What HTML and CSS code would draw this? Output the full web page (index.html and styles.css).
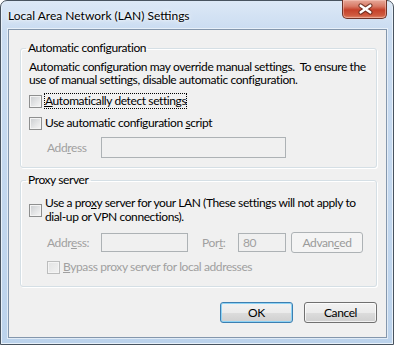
FILE: index.html
```html
<!DOCTYPE html>
<html lang="en">
<head>
    <meta charset="UTF-8">
    <title>Local Area Network (LAN) Settings</title>
    <link rel="stylesheet" href="styles.css">
</head>
<body>

    <div class="window">
        <div class="titlebar">
            <span class="title">Local Area Network (LAN) Settings</span>
            <div class="close">
                <svg width="45" height="18" viewBox="0 0 45 18">
                    <path d="M18.5 5.5 L28.5 12.5 M28.5 5.5 L18.5 12.5" stroke="#5a2418" stroke-width="5" stroke-linecap="round" opacity="0.75"/>
                    <path d="M18.5 5.5 L28.5 12.5 M28.5 5.5 L18.5 12.5" stroke="#ffffff" stroke-width="2.6" stroke-linecap="round"/>
                </svg>
            </div>
        </div>

        <div class="client">
            <fieldset class="group group-auto">
                <legend>Automatic configuration</legend>
                <p class="note">Automatic configuration may override manual settings.&nbsp; To ensure the<br>use of manual settings, disable automatic configuration.</p>
                <div class="check first">
                    <span class="box"></span>
                    <span class="check-text focused"><u>A</u>utomatically detect settings</span>
                </div>
                <div class="check">
                    <span class="box"></span>
                    <span class="check-text">Use automatic configuration <u>s</u>cript</span>
                </div>
                <div class="field-row">
                    <span class="field-label disabled">Add<u>r</u>ess</span>
                    <span class="input input-script"></span>
                </div>
            </fieldset>

            <fieldset class="group group-proxy">
                <legend>Proxy server</legend>
                <div class="check multi">
                    <span class="box"></span>
                    <span class="check-text">Use a pro<u>x</u>y server for your LAN (These settings will not apply to<br>dial-up or VPN connections).</span>
                </div>
                <div class="field-row proxy-row">
                    <span class="field-label disabled">Addr<u>e</u>ss:</span>
                    <span class="input input-address"></span>
                    <span class="field-label port-label disabled">Por<u>t</u>:</span>
                    <span class="input input-port disabled">80</span>
                    <span class="button button-disabled">Advan<u>c</u>ed</span>
                </div>
                <div class="check bypass">
                    <span class="box box-disabled"></span>
                    <span class="check-text disabled"><u>B</u>ypass proxy server for local addresses</span>
                </div>
            </fieldset>

            <div class="actions">
                <span class="button button-default">OK</span>
                <span class="button">Cancel</span>
            </div>
        </div>
    </div>

</body>
</html>
```

FILE: styles.css
```css
body {
    margin: 0;
    background-color: #ffffff;
    font-family: Lato, 'Liberation Sans', sans-serif;
    font-size: 12px;
    color: #000000;
}

.window {
    width: 394px;
    height: 345px;
    box-sizing: border-box;
    border: 1px solid #48535f;
    border-radius: 7px 7px 0 0;
    background: linear-gradient(180deg, #dce8f6 0, #cadcf1 30px, #bcd3ec 100%);
    box-shadow: inset 1px 0 0 #e8f1fa, inset -1px 0 0 #e8f1fa, inset 0 -1px 0 #e8f1fa;
    display: flex;
    flex-direction: column;
}

.titlebar {
    height: 28px;
    display: flex;
    align-items: flex-start;
    padding-left: 7px;
}

.title {
    line-height: 29px;
    font-size: 12px;
    text-shadow: 0 0 6px #ffffff, 0 0 3px #ffffff;
}

.close {
    margin-left: auto;
    margin-right: 6px;
    margin-top: -1px;
    width: 45px;
    height: 19px;
    box-sizing: border-box;
    border: 1px solid #6e3328;
    border-top: none;
    border-radius: 0 0 5px 5px;
    background: linear-gradient(180deg, #e7a99a 0, #d87a66 35%, #c5412a 55%, #cf5a3f 85%, #e08a6e 100%);
    box-shadow: inset 0 0 0 1px rgba(255, 210, 200, 0.45);
    display: flex;
    justify-content: center;
    align-items: center;
}

.close svg {
    display: block;
}

.client {
    flex: 1;
    min-height: 0;
    margin: 0 6px 6px 7px;
    border: 1px solid #8497ad;
    background-color: #f0f0f0;
    box-shadow: 0 0 0 1px rgba(255, 255, 255, 0.55);
    padding: 0 9px 0 11px;
    display: flex;
    flex-direction: column;
    letter-spacing: -0.4px;
    white-space: nowrap;
}

.group {
    margin: 11px 0 0;
    padding: 0 8px 9px;
    border: 1px solid #d5dfe5;
    border-radius: 3px;
    box-shadow: inset 1px 1px 0 #ffffff, 1px 1px 0 #ffffff;
    min-width: 0;
}

.group legend {
    padding: 0 2px;
    margin-left: -3px;
    line-height: 14px;
}

.group-proxy {
    margin-top: 5px;
    padding-bottom: 11px;
}

.note {
    margin: 5px 0 0;
    line-height: 13px;
}

.check {
    display: flex;
    align-items: center;
    margin-top: 6px;
}

.check.first {
    margin-top: 7px;
}

.check.multi {
    margin-top: 8px;
}

.check.bypass {
    padding-left: 18px;
    margin-top: 6px;
}

.box {
    width: 13px;
    height: 13px;
    box-sizing: border-box;
    flex: none;
    margin-right: 2px;
    border: 1px solid #8e8f8f;
    background: linear-gradient(135deg, #c9cccf 0, #e4e5e6 55%, #f7f7f7 100%);
    box-shadow: inset 0 0 0 1px #f4f4f4;
}

.box-disabled {
    border-color: #bcbdbd;
    background: linear-gradient(135deg, #e2e3e3 0, #f2f2f2 100%);
}

.check-text {
    border: 1px dotted transparent;
    line-height: 14px;
}

.check-text.focused {
    border-color: #000000;
}

.disabled {
    color: #a0a0a0;
}

.field-row {
    display: flex;
    align-items: center;
    margin-top: 6px;
    padding-left: 18px;
}

.proxy-row {
    margin-top: 7px;
}

.field-label {
    width: 54px;
    flex: none;
}

.port-label {
    width: 36px;
    margin-left: 14px;
}

.input {
    box-sizing: border-box;
    flex: none;
    height: 19px;
    border: 1px solid #adb2b5;
    background-color: #f0f0f0;
    padding-left: 4px;
    line-height: 17px;
}

.input-script {
    width: 185px;
    height: 21px;
}

.input-address {
    width: 87px;
}

.input-port {
    width: 48px;
}

.button {
    box-sizing: border-box;
    flex: none;
    width: 73px;
    height: 21px;
    border: 1px solid #707070;
    border-radius: 3px;
    background: linear-gradient(180deg, #f2f2f2 0, #ebebeb 50%, #dddddd 50%, #cfcfcf 100%);
    box-shadow: inset 0 0 0 1px rgba(255, 255, 255, 0.7);
    display: flex;
    justify-content: center;
    align-items: center;
}

.button-disabled {
    width: 72px;
    margin-left: 5px;
    border-color: #adb2b5;
    background: #f4f4f4;
    box-shadow: none;
    color: #9a9a9a;
}

.button-default {
    border-color: #3c7fb1;
    box-shadow: inset 0 0 0 1px #8ed3f5;
}

.actions {
    display: flex;
    justify-content: flex-end;
    gap: 11px;
    margin-top: 15px;
}
```
